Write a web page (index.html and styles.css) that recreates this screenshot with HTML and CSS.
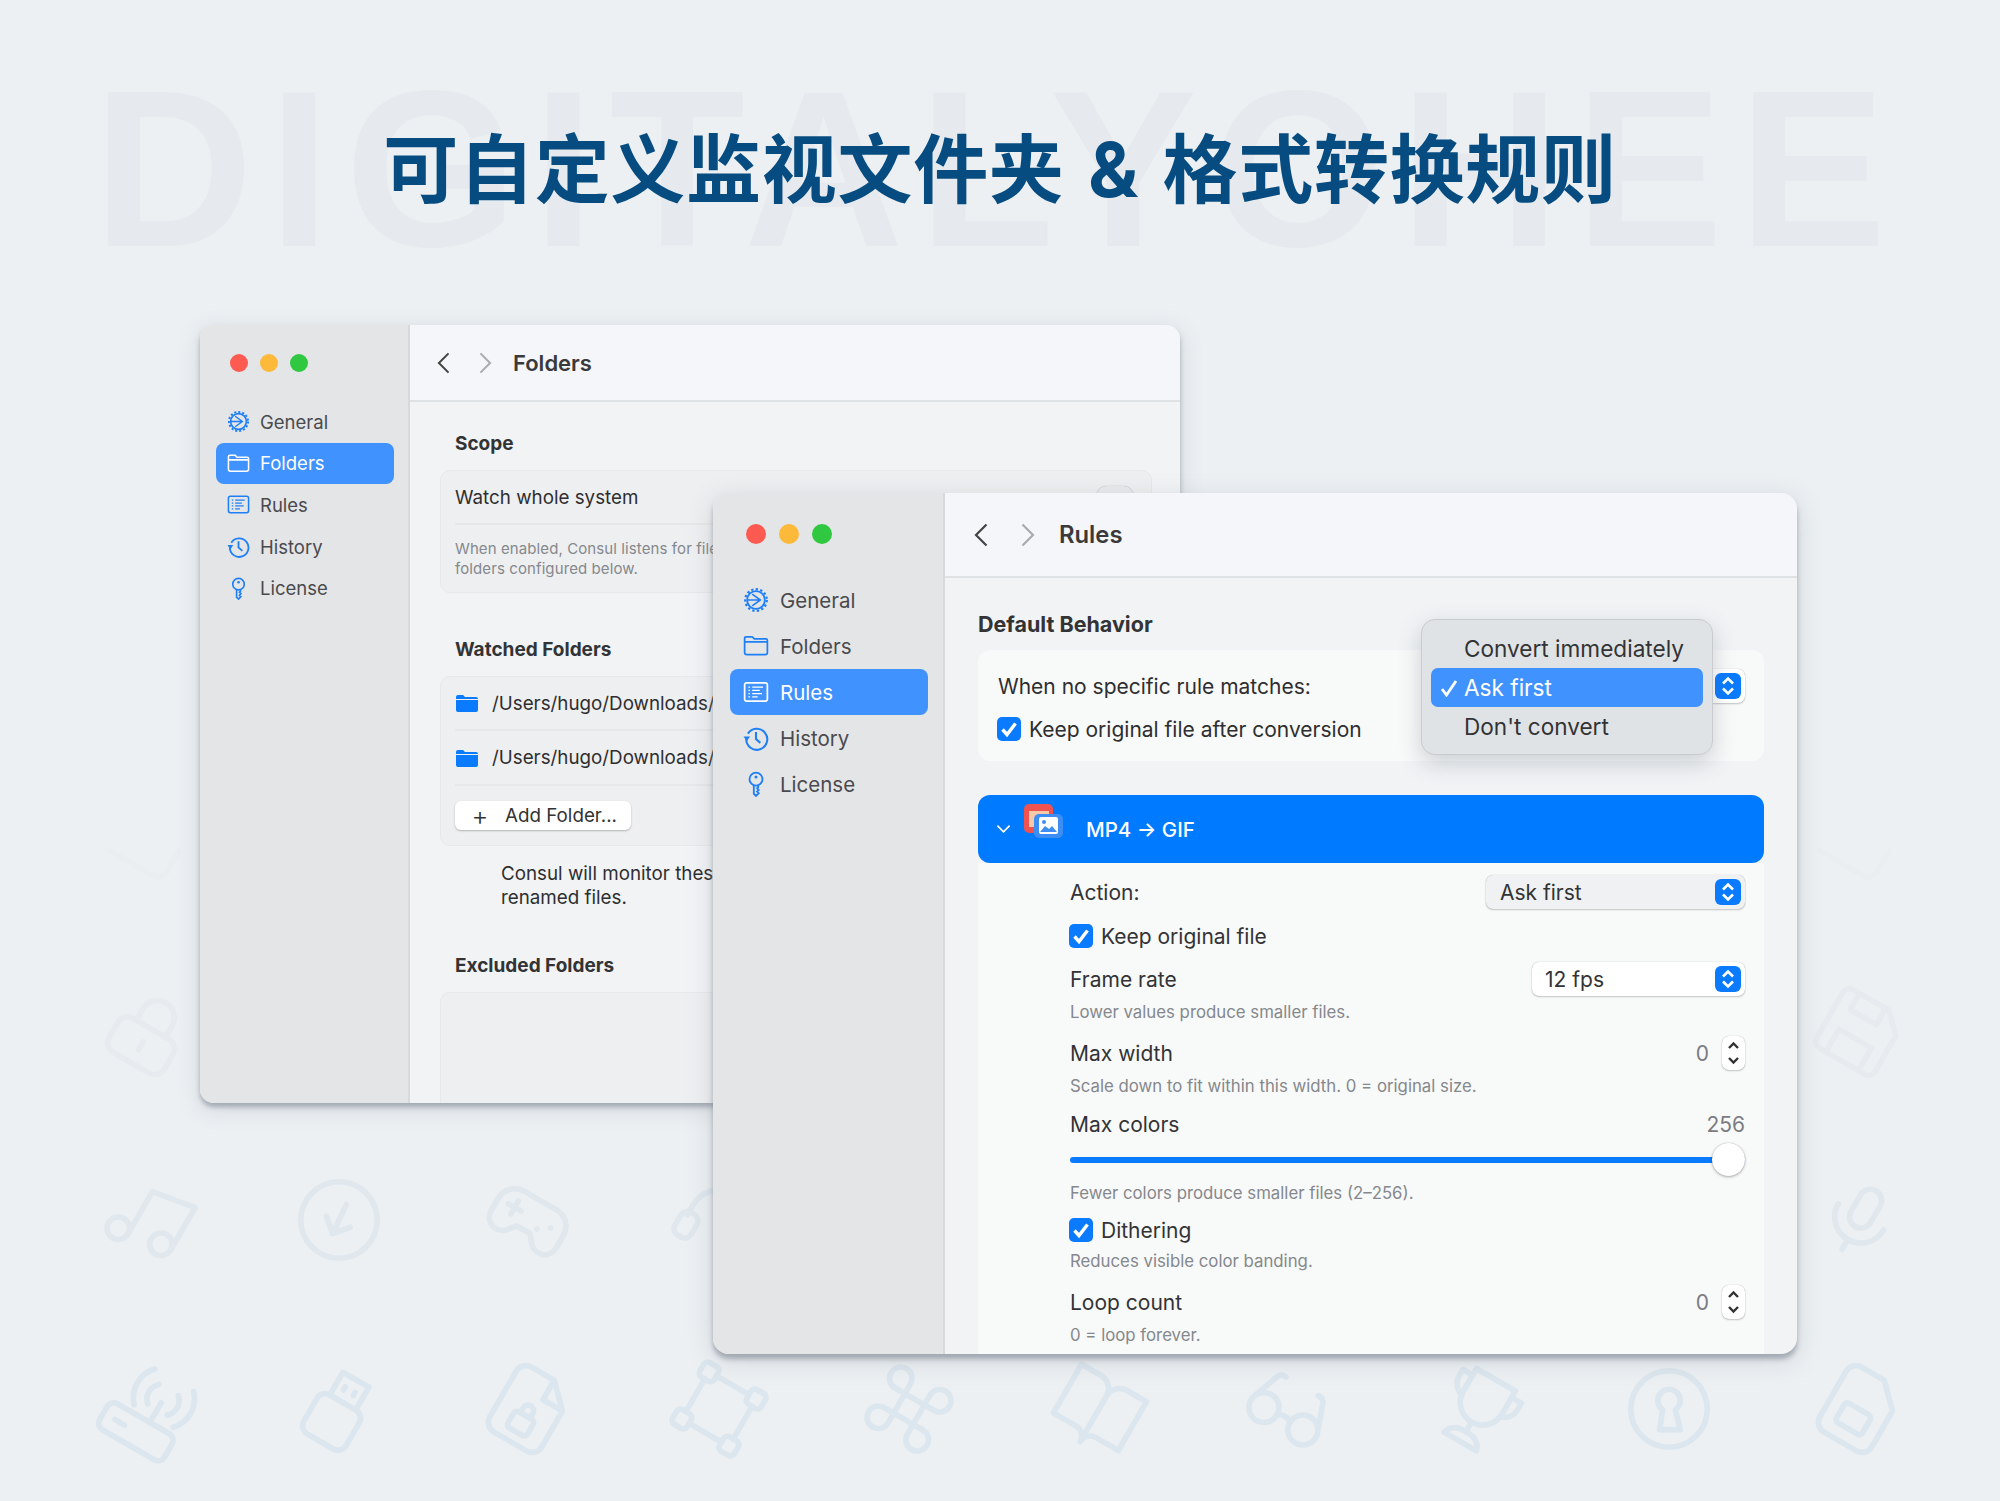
FILE: index.html
```html
<!DOCTYPE html>
<html lang="zh-CN">
<head>
  <meta charset="UTF-8" />
  <meta name="viewport" content="width=device-width, initial-scale=1.0" />
  <title>可自定义监视文件夹 &amp; 格式转换规则</title>
  <link rel="stylesheet" href="styles.css">
</head>
<body>
  <svg class="defs" width="0" height="0" aria-hidden="true">
    <symbol id="i-general" viewBox="0 0 24 24">
      <circle cx="12" cy="12" r="8.2" fill="none" stroke="currentColor" stroke-width="1.7"/>
      <circle cx="12" cy="12" r="10" fill="none" stroke="currentColor" stroke-width="2" stroke-dasharray="2.2 2.03"/>
      <path d="M8.500 6.500 16 12l-7.500 5.500M4 12h12" fill="none" stroke="currentColor" stroke-width="1.500"/>
    </symbol>
    <symbol id="i-folder" viewBox="0 0 24 24">
      <path d="M1.5 7V5a1.5 1.5 0 0 1 1.5-1.5h5.5L10.5 5.500H21A1.500 1.500 0 0 1 22.500 7v11A2 2 0 0 1 20.500 20h-17a2 2 0 0 1-2-2zM1.500 8.200h21" fill="none" stroke="currentColor" stroke-width="1.600"/>
    </symbol>
    <symbol id="i-rules" viewBox="0 0 24 24">
      <rect x="1.500" y="3.500" width="21" height="17" rx="2" fill="none" stroke="currentColor" stroke-width="1.600"/>
      <path d="M5 7.500h1.500M5 10.500h1.500M5 13.500h1.500M5 16.500h1.500M8.500 7.500h10M8.500 10.500h7M8.500 13.500h9M8.500 16.500h5" fill="none" stroke="currentColor" stroke-width="1.300"/>
    </symbol>
    <symbol id="i-history" viewBox="0 0 24 24">
      <path d="M4.500 8A9.700 9.700 0 1 1 3 13" fill="none" stroke="currentColor" stroke-width="1.900"/>
      <path d="M.5 10.500h6L3.500 15z" fill="currentColor"/>
      <path d="M12 6.500V13l4 3.500" fill="none" stroke="currentColor" stroke-width="1.900"/>
    </symbol>
    <symbol id="i-license" viewBox="0 0 24 24">
      <circle cx="12" cy="7.500" r="6" fill="none" stroke="currentColor" stroke-width="1.700"/>
      <circle cx="12" cy="5.500" r="1.400" fill="currentColor"/>
      <path d="M10 13v8l2 2 2.500-2.500-1.500-1.500 1.500-1.500-1.500-1.500L14 15v-2" fill="none" stroke="currentColor" stroke-width="1.700"/>
    </symbol>
    <symbol id="i-back" viewBox="0 0 14 24">
      <path d="M12.500 1.500 2 12l10.500 10.500" fill="none" stroke="currentColor" stroke-width="2.200"/>
    </symbol>
    <symbol id="i-forward" viewBox="0 0 14 24">
      <path d="M1.500 1.500 12 12 1.500 22.500" fill="none" stroke="currentColor" stroke-width="2.200"/>
    </symbol>
    <symbol id="i-check" viewBox="0 0 24 24">
      <path d="m5.500 12.500 4.500 5 8.500-11" fill="none" stroke="#fff" stroke-width="3.400"/>
    </symbol>
    <symbol id="i-updown" viewBox="0 0 26 26">
      <path d="m8 10.500 5-5 5 5M8 15.500l5 5 5-5" fill="none" stroke="#fff" stroke-width="2.600"/>
    </symbol>
    <symbol id="i-stepper" viewBox="0 0 23 34">
      <path d="m7 12 4.500-4.500L16 12M7 22l4.500 4.500L16 22" fill="none" stroke="#333" stroke-width="2.400"/>
    </symbol>
  </svg>

  <div class="stage">
    <div class="watermark" aria-hidden="true">DIGITALYOHEE</div>

    <div class="bg-icons" aria-hidden="true">
      <svg class="bg-ic fade3" viewBox="0 0 24 24"><path d="M4 19h13a3 3 0 0 0 3-3v-6"/></svg>
      <svg class="bg-ic fade3 far" viewBox="0 0 24 24"><path d="M4 19h13a3 3 0 0 0 3-3v-6"/></svg>

      <svg class="bg-ic fade2" viewBox="0 0 24 24"><rect x="3.500" y="11" width="17" height="10.500" rx="3"/><path d="M7.500 11V7.500a4.500 4.500 0 0 1 9 0V11M12 15v2.500"/></svg>
      <svg class="bg-ic fade2 far" viewBox="0 0 24 24"><path d="M5 3h11l5 5v11a2 2 0 0 1-2 2H5a2 2 0 0 1-2-2V5a2 2 0 0 1 2-2z"/><path d="M7 3v5h8V3M7 21v-7h10v7"/></svg>

      <svg class="bg-ic fade1" viewBox="0 0 24 24"><circle cx="6" cy="18" r="3"/><circle cx="18" cy="16" r="3"/><path d="M9 18V5l12-2v13"/></svg>
      <svg class="bg-ic fade1 upright" viewBox="0 0 24 24"><circle cx="12" cy="12" r="10.200"/><g transform="rotate(25 12 12)"><path d="M12 7.500v8.500M8.500 12.500l3.500 3.500 3.500-3.500"/></g></svg>
      <svg class="bg-ic fade1" viewBox="0 0 24 24"><path d="M7 6h10a5 5 0 0 1 5 5v4a3.500 3.500 0 0 1-6.300 2L14 15h-4l-1.700 2A3.500 3.500 0 0 1 2 15v-4a5 5 0 0 1 5-5z"/><path d="M7 9v4M5 11h4M15 13h.01M18 11h.01"/></svg>
      <svg class="bg-ic fade1" viewBox="0 0 24 24"><path d="M4 15v-3a8 8 0 0 1 16 0v3"/><rect x="2.500" y="14" width="5" height="7" rx="2"/><rect x="16.500" y="14" width="5" height="7" rx="2"/></svg>
      <svg class="bg-ic fade1 far" viewBox="0 0 24 24"><rect x="9" y="3" width="6" height="11" rx="3"/><path d="M5 11a7 7 0 0 0 14 0M12 18v3"/></svg>

      <svg class="bg-ic" viewBox="0 0 24 24"><rect x="2" y="15" width="20" height="8" rx="2"/><path d="M5.500 19h3M14 15V9M11 11a4 4 0 0 1 0-6M17 5a4 4 0 0 1 0 6M8 13a8 8 0 0 1 0-11M20 2a8 8 0 0 1 0 11"/></svg>
      <svg class="bg-ic" viewBox="0 0 24 24"><rect x="5.500" y="10" width="13" height="12" rx="2.500"/><path d="M8 10V3h8v7M10.500 6v1M13.500 6v1"/></svg>
      <svg class="bg-ic" viewBox="0 0 24 24"><path d="M14 2H7a3 3 0 0 0-3 3v14a3 3 0 0 0 3 3h10a3 3 0 0 0 3-3V8zM14 2v6h6"/><rect x="9" y="14" width="6" height="5" rx="1"/><path d="M10.500 14v-1.500a1.500 1.500 0 0 1 3 0V14"/></svg>
      <svg class="bg-ic" viewBox="0 0 24 24"><rect x="2.500" y="2.500" width="4.500" height="4.500" rx="1.200"/><rect x="17" y="2.500" width="4.500" height="4.500" rx="1.200"/><rect x="17" y="17" width="4.500" height="4.500" rx="1.200"/><rect x="2.500" y="17" width="4.500" height="4.500" rx="1.200"/><path d="M7 4.700h10M19.300 7v10M17 19.300H7M4.700 17V7"/></svg>
      <svg class="bg-ic" viewBox="0 0 24 24"><path d="M18 3a3 3 0 0 0-3 3v12a3 3 0 0 0 3 3 3 3 0 0 0 3-3 3 3 0 0 0-3-3H6a3 3 0 0 0-3 3 3 3 0 0 0 3 3 3 3 0 0 0 3-3V6a3 3 0 0 0-3-3 3 3 0 0 0-3 3 3 3 0 0 0 3 3h12a3 3 0 0 0 3-3 3 3 0 0 0-3-3z"/></svg>
      <svg class="bg-ic" viewBox="0 0 24 24"><path d="M2 4h6a4 4 0 0 1 4 4v14a3 3 0 0 0-3-3H2zM22 4h-6a4 4 0 0 0-4 4v14a3 3 0 0 1 3-3h7z"/></svg>
      <svg class="bg-ic" viewBox="0 0 24 24"><circle cx="6" cy="15" r="4"/><circle cx="18" cy="15" r="4"/><path d="M10 15c1-1 3-1 4 0M2.500 13 5 6a2 2 0 0 1 2-1M21.500 13 19 6a2 2 0 0 0-2-1"/></svg>
      <svg class="bg-ic" viewBox="0 0 24 24"><path d="M6 3h12v7a6 6 0 0 1-12 0zM6 5H3v2a4 4 0 0 0 3.200 4M18 5h3v2a4 4 0 0 1-3.200 4M12 16v3M7 22a4 4 0 0 1 4-3h2a4 4 0 0 1 4 3z"/></svg>
      <svg class="bg-ic upright" viewBox="0 0 24 24"><circle cx="12" cy="12" r="10.200"/><path d="M10.300 12.200a3 3 0 1 1 3.400 0L15 17.500H9.500z"/></svg>
      <svg class="bg-ic" viewBox="0 0 24 24"><path d="M7 2h7l6 6v11a3 3 0 0 1-3 3H7a3 3 0 0 1-3-3V5a3 3 0 0 1 3-3z"/><rect x="8" y="12" width="8" height="6" rx="1"/></svg>
    </div>

    <h1 class="headline">可自定义监视文件夹 &amp; 格式转换规则</h1>

    <!-- Folders window, behind -->
    <section class="window win-back">
      <aside class="sidebar">
        <div class="lights"><span class="light red"></span><span class="light amber"></span><span class="light green"></span></div>
        <nav class="side-nav">
          <a class="side-item"><svg class="side-icon"><use href="#i-general"/></svg>General</a>
          <a class="side-item active"><svg class="side-icon"><use href="#i-folder"/></svg>Folders</a>
          <a class="side-item"><svg class="side-icon"><use href="#i-rules"/></svg>Rules</a>
          <a class="side-item"><svg class="side-icon"><use href="#i-history"/></svg>History</a>
          <a class="side-item"><svg class="side-icon"><use href="#i-license"/></svg>License</a>
        </nav>
      </aside>
      <div class="main">
        <header class="toolbar">
          <svg class="chev"><use href="#i-back"/></svg>
          <svg class="chev off"><use href="#i-forward"/></svg>
          <span class="toolbar-title">Folders</span>
        </header>
        <div class="content">
          <h2 class="sec-title">Scope</h2>
          <div class="pane">
            <div class="pane-row watch-row">
              <span>Watch whole system</span>
              <span class="toggle"></span>
            </div>
            <p class="pane-note">When enabled, Consul listens for file changes everywhere<br>folders configured below.</p>
          </div>

          <h2 class="sec-title sec-gap">Watched Folders</h2>
          <div class="pane pane-folders">
            <div class="folder-row">
              <svg class="folder-ic" viewBox="0 0 22 18"><path d="M0 3a2 2 0 0 1 2-2h5l2 2h11a2 2 0 0 1 2 2H0z" fill="#0a7aff"/><path d="M0 6h22v10a2 2 0 0 1-2 2H2a2 2 0 0 1-2-2z" fill="#0a7aff"/></svg>
              <span>/Users/hugo/Downloads/</span>
            </div>
            <div class="folder-row">
              <svg class="folder-ic" viewBox="0 0 22 18"><path d="M0 3a2 2 0 0 1 2-2h5l2 2h11a2 2 0 0 1 2 2H0z" fill="#0a7aff"/><path d="M0 6h22v10a2 2 0 0 1-2 2H2a2 2 0 0 1-2-2z" fill="#0a7aff"/></svg>
              <span>/Users/hugo/Downloads/</span>
            </div>
            <button class="add-btn"><span class="plus">+</span>Add Folder...</button>
          </div>
          <p class="monitor-note">Consul will monitor these folders for new or<br>renamed files.</p>

          <h2 class="sec-title sec-gap">Excluded Folders</h2>
          <div class="pane pane-empty"></div>
        </div>
      </div>
    </section>

    <!-- Rules window, in front -->
    <section class="window win-front">
      <aside class="sidebar">
        <div class="lights"><span class="light red"></span><span class="light amber"></span><span class="light green"></span></div>
        <nav class="side-nav">
          <a class="side-item"><svg class="side-icon"><use href="#i-general"/></svg>General</a>
          <a class="side-item"><svg class="side-icon"><use href="#i-folder"/></svg>Folders</a>
          <a class="side-item active"><svg class="side-icon"><use href="#i-rules"/></svg>Rules</a>
          <a class="side-item"><svg class="side-icon"><use href="#i-history"/></svg>History</a>
          <a class="side-item"><svg class="side-icon"><use href="#i-license"/></svg>License</a>
        </nav>
      </aside>
      <div class="main">
        <header class="toolbar">
          <svg class="chev"><use href="#i-back"/></svg>
          <svg class="chev off"><use href="#i-forward"/></svg>
          <span class="toolbar-title">Rules</span>
        </header>
        <div class="content">
          <h2 class="sec-title">Default Behavior</h2>
          <div class="default-card">
            <div class="default-row">
              <span>When no specific rule matches:</span>
              <span class="select select-peek"><svg class="updown"><use href="#i-updown"/></svg></span>
            </div>
            <label class="check-row"><svg class="checkbox"><use href="#i-check"/></svg>Keep original file after conversion</label>

            <div class="menu">
              <div class="menu-item">Convert immediately</div>
              <div class="menu-item picked"><svg class="menu-check" viewBox="0 0 18 18"><path d="m2 10 4.500 6L16 2" fill="none" stroke="#fff" stroke-width="2.800"/></svg>Ask first</div>
              <div class="menu-item">Don't convert</div>
            </div>
          </div>

          <div class="rule-head">
            <svg class="rule-chev" viewBox="0 0 16 10"><path d="m1.500 1.500 6.500 6.500 6.500-6.500" fill="none" stroke="#fff" stroke-width="1.800"/></svg>
            <svg class="rule-app" viewBox="0 0 40 34">
              <rect width="29" height="29" rx="5" fill="#ef5350"/>
              <rect x="5" y="7" width="20" height="16" fill="#f6c9a8"/>
              <rect x="10" y="10" width="29" height="24" rx="5" fill="#3d8df2"/>
              <rect x="15" y="13" width="19" height="17" rx="2" fill="#fff"/>
              <path d="m16 28 5-6 4 3 3-3 5 6z" fill="#3d8df2"/>
              <circle cx="20" cy="18" r="2" fill="#3d8df2"/>
            </svg>
            <span class="rule-name">MP4 → GIF</span>
          </div>

          <div class="rule-body">
            <div class="row">
              <span>Action:</span>
              <span class="select select-muted">Ask first<svg class="updown"><use href="#i-updown"/></svg></span>
            </div>
            <label class="check-row row-check"><svg class="checkbox"><use href="#i-check"/></svg>Keep original file</label>
            <div class="row">
              <span>Frame rate</span>
              <span class="select select-fps">12 fps<svg class="updown"><use href="#i-updown"/></svg></span>
            </div>
            <p class="hint">Lower values produce smaller files.</p>
            <div class="row">
              <span>Max width</span>
              <span class="num-field"><span class="num">0</span><svg class="stepper"><use href="#i-stepper"/></svg></span>
            </div>
            <p class="hint">Scale down to fit within this width. 0 = original size.</p>
            <div class="row row-label">
              <span>Max colors</span>
              <span class="num">256</span>
            </div>
            <div class="slider"><span class="slider-fill"></span><span class="slider-thumb"></span></div>
            <p class="hint">Fewer colors produce smaller files (2–256).</p>
            <label class="check-row row-dither"><svg class="checkbox"><use href="#i-check"/></svg>Dithering</label>
            <p class="hint">Reduces visible color banding.</p>
            <div class="row">
              <span>Loop count</span>
              <span class="num-field"><span class="num">0</span><svg class="stepper"><use href="#i-stepper"/></svg></span>
            </div>
            <p class="hint">0 = loop forever.</p>
          </div>
        </div>
      </div>
    </section>
  </div>
</body>
</html>
```

FILE: styles.css
```css
* {
  box-sizing: border-box;
}
body {
  margin: 0;
  background: #ecf0f3;
  font-family: Inter, "Noto Sans CJK SC", sans-serif;
  color: #2e2e30;
}
.defs {
  position: absolute;
}
.stage {
  position: relative;
  width: 2000px;
  height: 1501px;
  overflow: hidden;
  background: #ecf0f3;
}

/* backdrop */
.watermark {
  position: absolute;
  left: 93px;
  top: 44px;
  font-family: "Liberation Sans", sans-serif;
  font-weight: 700;
  font-size: 222px;
  line-height: 250px;
  letter-spacing: 15px;
  white-space: nowrap;
  color: #e6eaee;
}
.bg-icons {
  position: absolute;
  left: 54px;
  top: 749px;
  display: grid;
  grid-template-columns: repeat(10, 190px);
  grid-auto-rows: 188.5px;
  place-items: center;
}
.bg-ic {
  width: 90px;
  height: 90px;
  fill: none;
  stroke: #dce6ee;
  stroke-width: 1.5;
  stroke-linecap: round;
  stroke-linejoin: round;
  transform: rotate(30deg);
}
.bg-ic.upright {
  transform: none;
}
.bg-ic.far {
  grid-column: 10;
}
.fade1 {
  stroke: #e0e7ed;
}
.fade2 {
  stroke: #e7ebef;
}
.fade3 {
  stroke: #eaeef1;
}

.headline {
  position: relative;
  margin: 0;
  padding-top: 125px;
  text-align: center;
  font-family: Inter, "Noto Sans CJK SC", sans-serif;
  font-size: 75px;
  line-height: 90px;
  font-weight: 700;
  letter-spacing: 0.7px;
  word-spacing: 5px;
  color: #074c80;
}

/* windows */
.window {
  position: absolute;
  display: flex;
  overflow: hidden;
  background: #f1f3f5;
}
.win-back {
  left: 200px;
  top: 325px;
  width: 980px;
  height: 778px;
  border-radius: 14px;
  box-shadow: 0 4px 5px rgba(120, 128, 140, 0.55), 0 6px 22px rgba(120, 128, 140, 0.22);
}
.win-front {
  left: 713px;
  top: 493px;
  width: 1084px;
  height: 861px;
  border-radius: 16px;
  box-shadow: 0 5px 5px rgba(120, 128, 140, 0.55), 0 6px 24px rgba(120, 128, 140, 0.25);
}
.sidebar {
  flex: none;
  background: #e4e5e7;
  border-right: 2px solid #d8d9db;
}
.win-back .sidebar {
  width: 210px;
  padding: 29px 14px 0 16px;
}
.win-front .sidebar {
  width: 232px;
  padding: 31px 15px 0 17px;
}
.lights {
  display: flex;
}
.win-back .lights {
  gap: 12px;
  margin: 0 0 29px 14px;
}
.win-front .lights {
  gap: 13px;
  margin: 0 0 33px 16px;
}
.light {
  border-radius: 50%;
}
.win-back .light {
  width: 18px;
  height: 18px;
}
.win-front .light {
  width: 20px;
  height: 20px;
}
.red {
  background: #fd5a52;
}
.amber {
  background: #fdb93a;
}
.green {
  background: #2fc840;
}
.side-item {
  display: flex;
  align-items: center;
  border-radius: 8px;
  color: #4a4a4e;
}
.win-back .side-item {
  height: 41.6px;
  padding-left: 11px;
  gap: 10px;
  font-size: 18.500px;
}
.win-front .side-item {
  height: 46px;
  padding-left: 13px;
  gap: 11px;
  font-size: 20.500px;
}
.side-item.active {
  background: #4092fe;
  color: #fff;
}
.side-icon {
  flex: none;
  color: #1f7ff5;
}
.win-back .side-icon {
  width: 23px;
  height: 23px;
}
.win-front .side-icon {
  width: 26px;
  height: 26px;
}
.side-item.active .side-icon {
  color: #fff;
}
.main {
  flex: 1;
  min-width: 0;
  display: flex;
  flex-direction: column;
}
.toolbar {
  flex: none;
  display: flex;
  align-items: center;
  background: #f4f6f9;
  border-bottom: 2px solid #dfe2e5;
  color: #3a3a3c;
  font-weight: 600;
}
.win-back .toolbar {
  height: 77px;
  padding-left: 27px;
  gap: 29px;
  font-size: 22px;
}
.win-front .toolbar {
  height: 85px;
  padding-left: 29px;
  gap: 33px;
  font-size: 23.800px;
}
.chev {
  color: #444;
}
.win-back .chev {
  width: 13px;
  height: 22px;
}
.win-front .chev {
  width: 14px;
  height: 24px;
}
.chev.off {
  color: #a9abae;
}
.win-back .toolbar-title {
  margin-left: -8px;
}
.win-front .toolbar-title {
  margin-left: -9px;
}
.content {
  flex: 1;
  min-height: 0;
}
.sec-title {
  margin: 0;
  font-weight: 700;
  color: #333335;
}

/* back window content */
.win-back .content {
  padding: 30px 28px 0 30px;
}
.win-back .sec-title {
  padding-left: 15px;
  margin-bottom: 14px;
  font-size: 19px;
  line-height: 24px;
}
.win-back .sec-gap {
  margin-top: 45px;
}
.pane {
  background: #eeeff1;
  border: 1px solid #e6e8ea;
  border-radius: 10px;
  padding: 0 14px;
  font-size: 18.800px;
}
.pane-row {
  display: flex;
  justify-content: space-between;
  align-items: center;
}
.watch-row {
  height: 54px;
  padding-right: 3px;
  border-bottom: 2px solid #e6e8ea;
}
.toggle {
  width: 38px;
  height: 22px;
  border-radius: 11px;
  background: #e9eaec;
  box-shadow: 0 0 1px rgba(0, 0, 0, 0.35);
}
.pane-note {
  margin: 0;
  padding: 14px 0 13px;
  font-size: 15px;
  letter-spacing: 0.1px;
  line-height: 20px;
  color: #85888c;
  white-space: nowrap;
}
.pane-folders {
  height: 170px;
}
.folder-row {
  display: flex;
  align-items: center;
  gap: 14px;
  height: 55px;
  padding-left: 1px;
  border-bottom: 2px solid #e6e8ea;
  white-space: nowrap;
}
.folder-row:first-child {
  height: 54px;
}
.folder-ic {
  width: 22px;
  height: 18px;
  flex: none;
}
.add-btn {
  display: flex;
  align-items: center;
  width: 176px;
  height: 29px;
  margin-top: 15px;
  padding: 0;
  background: #fff;
  border: 0;
  border-radius: 6px;
  box-shadow: 0 1px 2px rgba(0, 0, 0, 0.25);
  font: 18.800px Inter, sans-serif;
  color: #333;
}
.plus {
  width: 50px;
  text-align: center;
  font-size: 26px;
  line-height: 26px;
  font-weight: 300;
}
.monitor-note {
  margin: 16px 0 0 61px;
  font-size: 18.800px;
  line-height: 23.500px;
  white-space: nowrap;
}
.pane-empty {
  height: 200px;
}

/* front window content */
.win-front .content {
  padding: 33px 33px 0 33px;
}
.win-front .sec-title {
  margin-bottom: 13px;
  font-size: 21.500px;
  line-height: 26px;
}
.default-card {
  position: relative;
  height: 111px;
  padding: 18px 19px 0 20px;
  background: #f8f9f9;
  border-radius: 12px;
  font-size: 21px;
}
.default-row {
  display: flex;
  justify-content: space-between;
  align-items: center;
  height: 36px;
}
.check-row {
  display: flex;
  align-items: center;
  gap: 8px;
  height: 24px;
  font-size: 21px;
}
.default-card .check-row {
  margin-top: 13px;
}
.checkbox {
  width: 24px;
  height: 24px;
  margin-left: -1px;
  flex: none;
  background: #0a7aff;
  border-radius: 5px;
}
.select {
  position: relative;
  display: flex;
  align-items: center;
  height: 34px;
  border-radius: 7px;
  background: #fff;
  box-shadow: 0 0 1px rgba(0, 0, 0, 0.3), 0 1px 2px rgba(0, 0, 0, 0.2);
  font-size: 21px;
}
.select-peek {
  width: 200px;
}
.select-muted {
  width: 259px;
  padding-left: 14px;
  background: #eff1f3;
}
.select-fps {
  width: 213px;
  padding-left: 13px;
}
.updown {
  position: absolute;
  right: 4px;
  top: 4px;
  width: 26px;
  height: 26px;
  background: #0a7aff;
  border-radius: 6px;
}
.menu {
  position: absolute;
  left: 443px;
  top: -31px;
  width: 292px;
  height: 136px;
  padding: 9px;
  background: #e0e3e5;
  border: 1px solid #c9cccf;
  border-radius: 14px;
  box-shadow: 0 8px 22px rgba(90, 100, 110, 0.28);
  font-size: 22.600px;
  color: #333335;
}
.menu-item {
  position: relative;
  display: flex;
  align-items: center;
  height: 39px;
  padding-left: 33px;
  border-radius: 7px;
  white-space: nowrap;
}
.menu-item.picked {
  background: #4092fe;
  color: #fff;
}
.menu-check {
  position: absolute;
  left: 9px;
  top: 11px;
  width: 18px;
  height: 18px;
}
.rule-head {
  display: flex;
  align-items: center;
  height: 68px;
  margin-top: 34px;
  padding-left: 18px;
  background: #007aff;
  border-radius: 12px;
  color: #fff;
  font-size: 20.500px;
  font-weight: 500;
}
.rule-chev {
  width: 15px;
  height: 10px;
}
.rule-app {
  width: 40px;
  height: 34px;
  margin: -16px 0 0 13px;
}
.rule-name {
  margin-left: 22px;
}
.rule-body {
  height: 500px;
  padding: 12px 19px 0 92px;
  background: #f8f9f9;
  font-size: 21px;
  color: #333335;
}
.row {
  display: flex;
  justify-content: space-between;
  align-items: center;
  height: 34px;
  margin-top: 14px;
}
.rule-body > .row:first-child {
  margin-top: 0;
}
.row-label {
  height: 26px;
  margin-top: 15px;
}
.row-check {
  margin-top: 15px;
}
.row-dither {
  margin: 15px 0 9px;
}
.hint {
  margin: 6px 0 0;
  font-size: 16.800px;
  line-height: 20px;
  color: #85888c;
}
.num-field {
  display: flex;
  align-items: center;
  gap: 13px;
}
.num {
  color: #7c7c80;
}
.stepper {
  width: 23px;
  height: 34px;
  background: #fff;
  border-radius: 7px;
  box-shadow: 0 0 1px rgba(0, 0, 0, 0.3), 0 1px 2px rgba(0, 0, 0, 0.2);
}
.slider {
  position: relative;
  display: flex;
  align-items: center;
  height: 33px;
  margin: 6px 0 7px;
}
.slider-fill {
  width: 100%;
  height: 6px;
  border-radius: 3px;
  background: #0a7aff;
}
.slider-thumb {
  position: absolute;
  right: 0;
  top: 0;
  width: 33px;
  height: 33px;
  border-radius: 50%;
  background: #fff;
  box-shadow: 0 0 1px rgba(0, 0, 0, 0.3), 0 1px 3px rgba(0, 0, 0, 0.3);
}
```
